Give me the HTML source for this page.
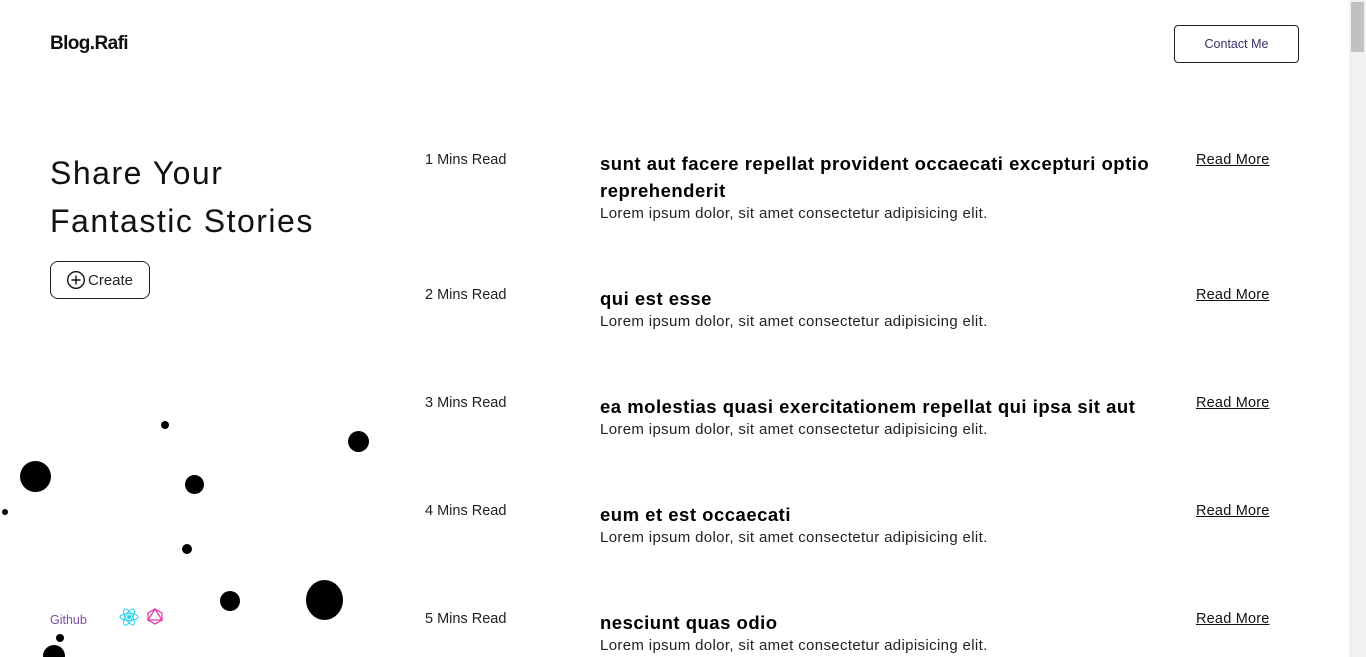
<!DOCTYPE html>
<html><head><meta charset="utf-8"><style>
*{margin:0;padding:0;box-sizing:border-box}
html,body{width:1366px;height:657px;overflow:hidden}
body{background:#fff;font-family:"Liberation Sans",sans-serif;color:#111;position:relative}
.a{position:absolute;white-space:nowrap}
.logo{left:50px;top:33px;font-weight:bold;font-size:19px;letter-spacing:-0.6px}
.contact{left:1174px;top:25px;width:125px;height:38px;border:1px solid #222;border-radius:4px;font-size:12.5px;color:#3a2f6a;text-align:center;line-height:36px}
.h1{left:50px;font-size:32px;letter-spacing:1.5px}
.create{left:50px;top:261px;width:100px;height:38px;border:1px solid #222;border-radius:8px;font-size:15px;padding-left:15px;color:#222;display:flex;align-items:center;gap:2px}
.mins{left:425px;font-size:14.5px;color:#222;top:0}
.t{left:600px;font-weight:bold;font-size:18.5px;line-height:27px;color:#000;letter-spacing:0.5px}
.d{left:600px;font-size:15px;color:#222;letter-spacing:0.35px}
.r{left:1196px;font-size:14.5px;text-decoration:underline;color:#111;letter-spacing:0.2px}
.sb{left:1349px;top:0;width:17px;height:657px;background:#f1f1f1}
.th{left:1351px;top:2px;width:13px;height:50px;background:#c1c1c1}
.dot{position:absolute;background:#000;border-radius:50%}
</style></head><body>
<div class="a logo">Blog.Rafi</div>
<div class="a contact">Contact Me</div>
<div class="a h1" style="top:155px">Share Your</div>
<div class="a h1" style="top:203px">Fantastic Stories</div>
<div class="a create"><svg width="20" height="20" viewBox="0 0 20 20" fill="none" stroke="#111" stroke-width="1.4"><circle cx="10" cy="10" r="8.3"/><path d="M10 5.5v9M5.5 10h9"/></svg>Create</div>

<div class="a mins" style="top:152px">1 Mins Read</div>
<div class="a t" style="top:150px">sunt aut facere repellat provident occaecati excepturi optio<br>reprehenderit</div>
<div class="a d" style="top:205px">Lorem ipsum dolor, sit amet consectetur adipisicing elit.</div>
<div class="a r" style="top:152px">Read More</div>

<div class="a mins" style="top:287px">2 Mins Read</div>
<div class="a t" style="top:285px">qui est esse</div>
<div class="a d" style="top:313px">Lorem ipsum dolor, sit amet consectetur adipisicing elit.</div>
<div class="a r" style="top:287px">Read More</div>

<div class="a mins" style="top:395px">3 Mins Read</div>
<div class="a t" style="top:393px">ea molestias quasi exercitationem repellat qui ipsa sit aut</div>
<div class="a d" style="top:421px">Lorem ipsum dolor, sit amet consectetur adipisicing elit.</div>
<div class="a r" style="top:395px">Read More</div>

<div class="a mins" style="top:503px">4 Mins Read</div>
<div class="a t" style="top:501px">eum et est occaecati</div>
<div class="a d" style="top:529px">Lorem ipsum dolor, sit amet consectetur adipisicing elit.</div>
<div class="a r" style="top:503px">Read More</div>

<div class="a mins" style="top:611px">5 Mins Read</div>
<div class="a t" style="top:609px">nesciunt quas odio</div>
<div class="a d" style="top:637px">Lorem ipsum dolor, sit amet consectetur adipisicing elit.</div>
<div class="a r" style="top:611px">Read More</div>

<div class="dot" style="left:20px;top:461px;width:31px;height:31px"></div>
<div class="dot" style="left:161px;top:421px;width:8px;height:8px"></div>
<div class="dot" style="left:348px;top:431px;width:21px;height:21px"></div>
<div class="dot" style="left:185px;top:475px;width:19px;height:19px"></div>
<div class="dot" style="left:2px;top:509px;width:6px;height:6px"></div>
<div class="dot" style="left:182px;top:544px;width:10px;height:10px"></div>
<div class="dot" style="left:220px;top:591px;width:20px;height:20px"></div>
<div class="dot" style="left:306px;top:580px;width:37px;height:40px"></div>
<div class="dot" style="left:56px;top:634px;width:8px;height:8px"></div>
<div class="dot" style="left:43px;top:645px;width:22px;height:22px"></div>

<div class="a" style="left:50px;top:613px;font-size:12.5px;color:#7a4fa0">Github</div>
<svg class="a" style="left:119px;top:608px" width="20" height="18" viewBox="-10 -9 20 18" fill="none" stroke="#22d3ee" stroke-width="1"><ellipse rx="9" ry="3.5"/><ellipse rx="9" ry="3.5" transform="rotate(60)"/><ellipse rx="9" ry="3.5" transform="rotate(-60)"/><circle r="1.5" fill="#22d3ee"/></svg>
<svg class="a" style="left:146px;top:607px" width="18" height="19" viewBox="0 0 18 19" fill="none" stroke="#e535ab" stroke-width="1.2"><polygon points="9,2 16,6 16,13 9,17 2,13 2,6"/><polygon points="9,2 16,13 2,13"/></svg>

<div class="a sb"></div><div class="a th"></div>
</body></html>
